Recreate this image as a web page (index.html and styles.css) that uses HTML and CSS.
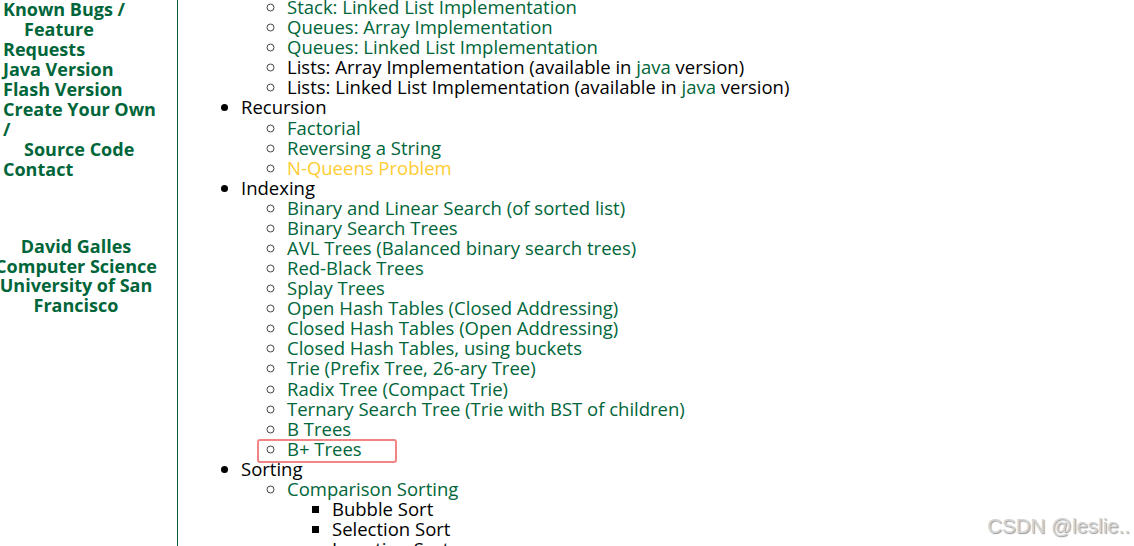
FILE: index.html
```html
<!DOCTYPE html>
<html>
<head>
<meta charset="utf-8">
<link rel="stylesheet" href="styles.css">
</head>
<body>
<div class="page">
  <div class="side">
    <div class="nav">
      <a class="nl">Known Bugs /</a>
      <a class="nl ind">Feature</a>
      <a class="nl">Requests</a>
      <a class="nl">Java Version</a>
      <a class="nl">Flash Version</a>
      <a class="nl">Create Your Own</a>
      <a class="nl">/</a>
      <a class="nl ind">Source Code</a>
      <a class="nl">Contact</a>
    </div>
    <div class="author">
      <div>David Galles</div>
      <div>Computer Science</div>
      <div>University of San</div>
      <div>Francisco</div>
    </div>
  </div>
  <div class="main">
    <ul class="l1">
      <li class="plain">
        <ul class="l2">
          <li><a>Stack: Linked List Implementation</a></li>
          <li><a>Queues: Array Implementation</a></li>
          <li><a>Queues: Linked List Implementation</a></li>
          <li class="blk">Lists: Array Implementation (available in <a>java</a> version)</li>
          <li class="blk">Lists: Linked List Implementation (available in <a>java</a> version)</li>
        </ul>
      </li>
      <li>Recursion
        <ul class="l2">
          <li><a>Factorial</a></li>
          <li><a>Reversing a String</a></li>
          <li><a class="yel">N-Queens Problem</a></li>
        </ul>
      </li>
      <li>Indexing
        <ul class="l2">
          <li><a>Binary and Linear Search (of sorted list)</a></li>
          <li><a>Binary Search Trees</a></li>
          <li><a>AVL Trees (Balanced binary search trees)</a></li>
          <li><a>Red-Black Trees</a></li>
          <li><a>Splay Trees</a></li>
          <li><a>Open Hash Tables (Closed Addressing)</a></li>
          <li><a>Closed Hash Tables (Open Addressing)</a></li>
          <li><a>Closed Hash Tables, using buckets</a></li>
          <li><a>Trie (Prefix Tree, 26-ary Tree)</a></li>
          <li><a>Radix Tree (Compact Trie)</a></li>
          <li><a>Ternary Search Tree (Trie with BST of children)</a></li>
          <li><a>B Trees</a></li>
          <li class="mark"><a>B+ Trees</a><span class="box"></span></li>
        </ul>
      </li>
      <li>Sorting
        <ul class="l2">
          <li><a>Comparison Sorting</a>
            <ul class="l3">
              <li>Bubble Sort</li>
              <li>Selection Sort</li>
              <li>Insertion Sort</li>
            </ul>
          </li>
        </ul>
      </li>
    </ul>
  </div>
</div>
<div class="wm">CSDN @leslie..</div>
</body>
</html>
```
FILE: styles.css
```css
html, body {
  margin: 0;
  padding: 0;
  background: #fff;
  overflow: hidden;
  height: 546px;
}
body {
  font-family: "Open Sans", "Noto Sans", sans-serif;
  font-size: 18.5px;
  line-height: 20.08px;
  color: #000;
}
.page {
  display: flex;
  height: 546px;
}
.side {
  width: 177px;
  flex: none;
  border-right: 1px solid #0b5a38;
  font-weight: bold;
  font-size: 18px;
  line-height: 19.95px;
  color: #00663a;
  overflow: hidden;
}
.nav {
  display: flex;
  flex-direction: column;
  padding-left: 3px;
}
.nl {
  display: block;
  white-space: nowrap;
}
.ind {
  padding-left: 21px;
}
.author {
  width: 152px;
  margin-top: 57px;
  text-align: center;
  white-space: nowrap;
  display: flex;
  flex-direction: column;
  align-items: center;
}
.main {
  flex: 1;
  margin-top: -23px;
}
a {
  color: #00663a;
}
.yel {
  color: #ffcc33;
}
ul {
  margin: 0;
  list-style: disc;
}
.l1 {
  padding-left: 63px;
}
.l1 > li.plain {
  list-style: none;
}
.l1 > li.plain > .l2 {
  padding-top: 20.08px;
}
.l2 {
  padding-left: 46px;
  list-style: circle;
}
.l2 > li::marker {
  color: #444;
}
.l3 {
  padding-left: 45px;
  list-style: square;
}
.l3 > li::marker {
  color: #000;
}
.mark {
  position: relative;
}
.box {
  position: absolute;
  left: -30px;
  top: 0;
  width: 136px;
  height: 20px;
  border: 2px solid #f08584;
  border-radius: 3px;
}
.wm {
  position: absolute;
  right: 4px;
  bottom: 10px;
  font-family: "Liberation Sans", Arial, sans-serif;
  font-size: 20.5px;
  color: #d4d4d4;
  text-shadow: 1px 1px 1px #9a9a9a;
}
```
